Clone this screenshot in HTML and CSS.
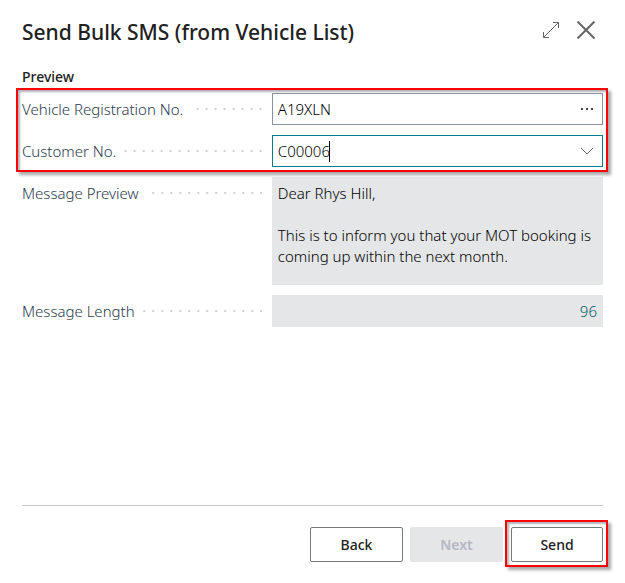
FILE: index.html
```html
<!DOCTYPE html>
<html lang="en">
<head>
<meta charset="utf-8">
<meta name="viewport" content="width=device-width, initial-scale=1">
<title>Send Bulk SMS</title>
<link rel="stylesheet" href="styles.css">
</head>
<body>
<form class="dialog">
  <header class="dialog-header">
    <h1>Send Bulk SMS (from Vehicle List)</h1>
    <div class="window-actions">
      <button type="button" class="icon-button" aria-label="Expand">
        <svg width="18" height="18" viewBox="0 0 18 18"><path d="M1.5 16.5 16.5 1.5M11 1.5h5.5V7M1.5 11v5.5H7"/></svg>
      </button>
      <button type="button" class="icon-button close" aria-label="Close">
        <svg width="18" height="18" viewBox="0 0 18 18"><path d="M.5.5l17 17M17.5.5l-17 17"/></svg>
      </button>
    </div>
  </header>

  <main class="fields">
    <h2>Preview</h2>
    <div class="group highlight">
      <div class="field">
        <label for="registration">Vehicle Registration No.</label>
        <div class="control">
          <input id="registration" type="text" value="A19XLN">
          <button type="button" class="assist" aria-label="Look up registration">
            <svg width="14" height="8" viewBox="0 0 14 8"><path class="dot" d="M1 3h2v2H1zM6 3h2v2H6zM11 3h2v2h-2z"/></svg>
          </button>
        </div>
      </div>
      <div class="field">
        <label for="customer">Customer No.</label>
        <div class="control active">
          <input id="customer" type="text" value="C00006">
          <span class="caret"></span>
          <button type="button" class="assist" aria-label="Choose customer">
            <svg width="14" height="8" viewBox="0 0 14 8"><path d="M1 1l6 6 6-6"/></svg>
          </button>
        </div>
      </div>
    </div>
    <div class="field">
      <label for="message">Message Preview</label>
      <textarea id="message" rows="5" readonly>Dear Rhys Hill,

This is to inform you that your MOT booking is coming up within the next month.</textarea>
    </div>
    <div class="field">
      <label for="length">Message Length</label>
      <input id="length" class="readonly number" type="text" value="96" readonly>
    </div>
  </main>

  <footer class="dialog-footer">
    <button type="button" class="action">Back</button>
    <button type="button" class="action" disabled>Next</button>
    <div class="highlight"><button type="submit" class="action send">Send</button></div>
  </footer>
</form>
</body>
</html>
```
FILE: styles.css
```css
* {
  box-sizing: border-box;
}

body {
  margin: 0;
  background: #fff;
  color: #212121;
  font: 14px/21px "Noto Sans", "Open Sans", sans-serif;
}

button,
input,
textarea {
  font: inherit;
  color: inherit;
  outline: none;
}

.dialog {
  display: flex;
  flex-direction: column;
  min-height: 100vh;
  padding: 16px 22px 21px;
}

.dialog-header {
  display: flex;
  justify-content: space-between;
  align-items: center;
  height: 32px;
}

h1 {
  margin: 0;
  font-size: 21px;
  line-height: 32px;
  font-weight: 500;
}

.window-actions {
  display: flex;
  gap: 17px;
  margin-right: 8px;
  padding-bottom: 4px;
}

.icon-button,
.assist {
  display: flex;
  padding: 0;
  border: 0;
  background: none;
}

svg {
  fill: none;
  stroke: #666;
}

.close svg {
  stroke-width: 2;
}

.fields {
  display: flex;
  flex-direction: column;
  gap: 10px;
  padding-top: 18px;
}

h2 {
  margin: 0 0 -4px;
  font-size: 14px;
  line-height: 21px;
  font-weight: 500;
}

.group {
  display: flex;
  flex-direction: column;
  gap: 10px;
}

.field {
  display: grid;
  grid-template-columns: 43fr 57fr;
  align-items: start;
  font-size: 15px;
  font-weight: 300;
}

label {
  display: flex;
  align-items: center;
  gap: 8px;
  height: 32px;
  padding-right: 10px;
  color: #2c3a4e;
  white-space: nowrap;
}

label::after {
  content: "";
  flex: 1;
  height: 2px;
  background: linear-gradient(to left, #d0d0d0 2px, transparent 2px) right center / 9px 2px;
}

.control {
  display: flex;
  align-items: center;
  position: relative;
  height: 32px;
  padding-right: 8px;
  border: 1px solid #8c92a0;
}

.control.active {
  border-color: #008089;
}

.control input {
  flex: 1;
  min-width: 0;
  height: 30px;
  padding: 0 5px;
  border: 0;
  background: none;
}

.control input,
textarea {
  color: #000;
}

.caret {
  position: absolute;
  left: 56px;
  top: 5px;
  width: 1px;
  height: 21px;
  background: #000;
}

.dot {
  fill: #444;
  stroke: none;
}

textarea,
.readonly {
  display: block;
  width: 100%;
  border: 0;
  border-radius: 0;
  background: #e5e6e8;
}

textarea {
  height: 108px;
  padding: 6px 3px 6px 6px;
  resize: none;
  overflow: hidden;
}

.readonly {
  height: 32px;
  padding: 0 6px;
}

.number {
  color: #005a62;
  text-align: right;
}

.dialog-footer {
  display: flex;
  justify-content: flex-end;
  gap: 7px;
  margin-top: auto;
  padding-top: 21px;
  border-top: 1px solid #c8c8c8;
}

.action {
  display: block;
  width: 93px;
  height: 35px;
  padding: 0;
  border: 1px solid #777;
  border-radius: 2px;
  background: #fff;
  font-weight: 500;
}

.action.send {
  width: 92px;
  margin-left: 1px;
}

.action:disabled {
  border-color: #e5e6e8;
  background: #e5e6e8;
  color: #b3b8c1;
  font-weight: 600;
}

.highlight {
  position: relative;
}

.highlight::after {
  content: "";
  position: absolute;
  inset: -5px -5px -5px -6px;
  border: 2px solid #f00;
  box-shadow: 3px 3px 3px rgba(0, 0, 0, .35), inset 2px 2px 2px rgba(0, 0, 0, .3);
  pointer-events: none;
}

.dialog-footer .highlight::after {
  inset: -7px -5px -5px -5px;
}
```
